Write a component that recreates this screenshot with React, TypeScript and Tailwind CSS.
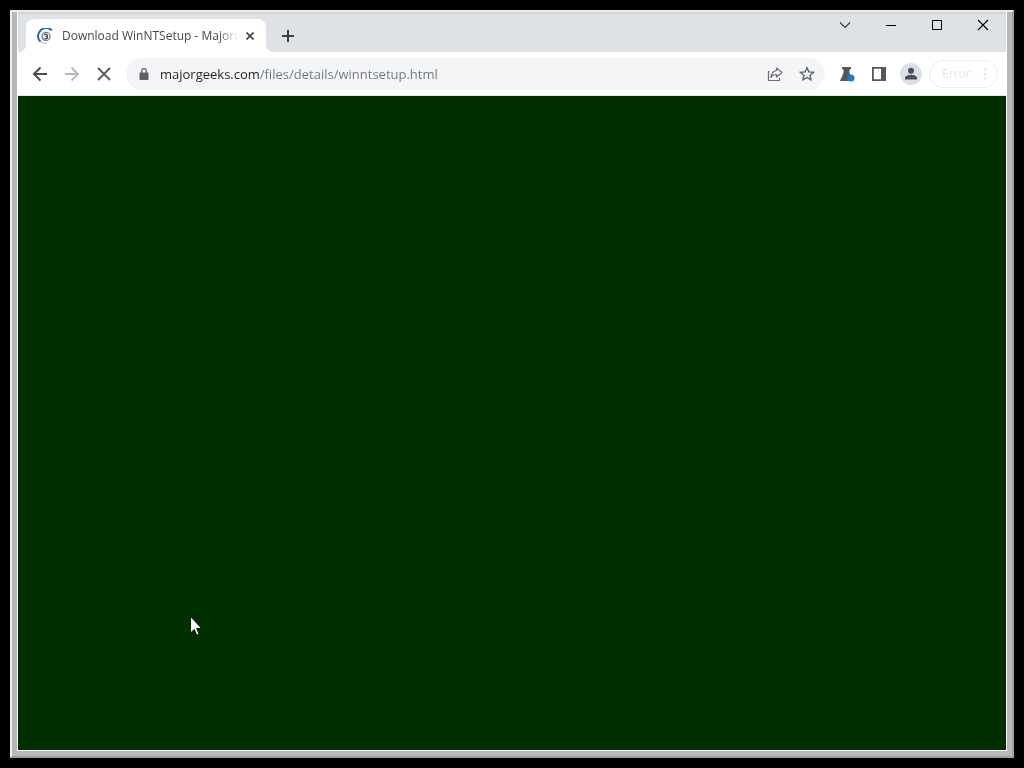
import type { ReactNode } from 'react';

const pageUrl = 'majorgeeks.com/files/details/winntsetup.html';

interface IconButtonProps {
  label: string;
  className?: string;
  children: ReactNode;
}

function IconButton({ label, className = 'w-8 h-7', children }: IconButtonProps) {
  return (
    <button
      type="button"
      aria-label={label}
      className={`${className} flex flex-shrink-0 items-center justify-center`}
    >
      {children}
    </button>
  );
}

function Favicon() {
  return (
    <svg className="w-4 h-4 flex-shrink-0" viewBox="0 0 16 16" fill="none">
      <path d="M14.8 2.4A7.6 7.6 0 0 0 2.4 4 7 7 0 0 0 3.6 13.6" stroke="#2f66b0" strokeWidth="2" />
      <path d="M3.6 13.6A7 7 0 0 0 10 15.2" stroke="#9dbbe0" strokeWidth="1" />
      <circle cx="9" cy="8.4" r="4" stroke="#6d737e" strokeWidth="1.2" />
      <path d="M7.2 6.8c1.400-1 3.400-.4 3.200.8-.1.800-1 1-1.800.9 1.400 0 2.200.6 1.800 1.500-.5.900-2 .9-2.800.2" stroke="#3b414c" strokeWidth="1.3" />
    </svg>
  );
}

function TabStrip() {
  return (
    <div className="flex h-[38px] items-end bg-[#dee1e6]">
      <div className="w-2 h-2 flex-shrink-0 bg-[radial-gradient(circle_at_0_0,transparent_8px,#fff_8px)]" />
      <div className="flex h-[33px] w-[240px] min-w-0 items-center rounded-t-lg bg-white pl-[11px] pr-3">
        <Favicon />
        <span className="ml-[9px] w-[176px] overflow-hidden whitespace-nowrap text-[12px] leading-4 text-[#45494d] [mask-image:linear-gradient(to_right,#000_156px,transparent_176px)]">
          Download WinNTSetup - MajorGeeks
        </span>
        <IconButton label="Close tab" className="ml-auto w-2 h-4">
          <svg className="w-2 h-2" viewBox="0 0 8 8" stroke="#3c4043" strokeWidth="1.6">
            <path d="M.5.5l7 7M7.5.5l-7 7" />
          </svg>
        </IconButton>
      </div>
      <div className="w-2 h-2 flex-shrink-0 bg-[radial-gradient(circle_at_100%_0,transparent_8px,#fff_8px)]" />
      <IconButton label="New tab" className="h-8 w-7">
        <svg className="w-3 h-3" viewBox="0 0 12 12" stroke="#3c4043" strokeWidth="2">
          <path d="M6 0v12M0 6h12" />
        </svg>
      </IconButton>

      <div className="ml-auto flex self-start">
        <IconButton label="Search tabs" className="h-[22px] w-[46px]">
          <svg className="w-3 h-3" viewBox="0 0 12 12" fill="none" stroke="#33363a" strokeWidth="1.1">
            <path d="M1 3.5l5 5 5-5" />
          </svg>
        </IconButton>
        <IconButton label="Minimize" className="h-[22px] w-[46px]">
          <svg className="w-3 h-3" viewBox="0 0 12 12" fill="#000">
            <path d="M1 6h10v1H1z" />
          </svg>
        </IconButton>
        <IconButton label="Maximize" className="h-[22px] w-[46px]">
          <svg className="w-3 h-3" viewBox="0 0 12 12" fill="none" stroke="#000">
            <path d="M1.5 1.5h9v9h-9z" />
          </svg>
        </IconButton>
        <IconButton label="Close" className="h-[22px] w-[46px]">
          <svg className="w-3 h-3" viewBox="0 0 12 12" stroke="#000" strokeWidth="1.1">
            <path d="M1 1l10 10M11 1L1 11" />
          </svg>
        </IconButton>
      </div>
    </div>
  );
}

function AddressBar() {
  return (
    <div className="ml-1.5 flex h-8 min-w-0 flex-1 items-center rounded-full bg-[#f4f5f6] pl-3 pr-0.5">
      <svg className="w-3 h-3 flex-shrink-0" viewBox="0 0 12 12">
        <path d="M3.7 5V3a2.3 2.3 0 0 1 4.6 0v2" fill="none" stroke="#5f6368" strokeWidth="1.3" />
        <path d="M2 4.5h8a.5.5 0 0 1 .5.5v6.5a.5.5 0 0 1-.5.5H2a.5.5 0 0 1-.5-.5V5a.5.5 0 0 1 .5-.5z" fill="#5f6368" />
      </svg>
      {/* the host name is darker than the path after it */}
      <input
        type="text"
        aria-label="Address and search bar"
        defaultValue={pageUrl}
        className="ml-2.5 h-6 min-w-0 flex-1 bg-[linear-gradient(to_right,#202124_100px,#70757a_100px)] bg-clip-text text-[13px] text-transparent outline-none"
      />
      <IconButton label="Share this page">
        <svg className="w-4 h-4" viewBox="0 0 16 16" fill="none" stroke="#6b6f74" strokeWidth="1.2">
          <path d="M2.5 5.5h-1v9h11v-2.500" />
          <path d="M9.5 2l5.500 4.500-5.500 4.500V8.500C7 8.500 5 9.500 4 11.500c.3-4 2.500-6.500 5.500-7z" strokeLinejoin="round" />
        </svg>
      </IconButton>
      <IconButton label="Bookmark this tab">
        <svg className="w-4 h-4" viewBox="0 0 16 16" fill="none" stroke="#5f6368" strokeWidth="1.4">
          <path d="M8 1.800l1.900 4.100 4.500.5-3.400 3 1 4.400L8 11.500l-4 2.300 1-4.400-3.400-3 4.500-.5z" />
        </svg>
      </IconButton>
    </div>
  );
}

function Toolbar() {
  return (
    <div className="flex h-11 items-center border-b border-[#e4e8e4] bg-white pl-1.5 pr-2">
      <IconButton label="Back">
        <svg className="w-4 h-4" viewBox="0 0 16 16" fill="none" stroke="#4b4f54" strokeWidth="2">
          <path d="M15 8H2M8.5 1.500L2 8l6.500 6.500" />
        </svg>
      </IconButton>
      <IconButton label="Forward">
        <svg className="w-4 h-4" viewBox="0 0 16 16" fill="none" stroke="#b9bbbe" strokeWidth="2">
          <path d="M1 8h13M7.5 1.500L14 8l-6.500 6.500" />
        </svg>
      </IconButton>
      <IconButton label="Stop loading">
        <svg className="w-4 h-4" viewBox="0 0 16 16" stroke="#55595d" strokeWidth="1.8">
          <path d="M2 2l12 12M14 2L2 14" />
        </svg>
      </IconButton>

      <AddressBar />

      <div className="ml-1.5 flex items-center">
        <IconButton label="Experiments">
          <svg className="w-4 h-4" viewBox="0 0 16 16">
            <path d="M3 1h9v1.500L10.500 4v3L14 15H1l3.500-8V4L3 2.500z" fill="#55595d" />
            <circle cx="12" cy="12" r="3.500" fill="#1a7fc4" />
          </svg>
        </IconButton>
        <IconButton label="Side panel">
          <svg className="w-4 h-4" viewBox="0 0 16 16">
            <path d="M1.9 1.900h12.200v12.200H1.900z" fill="none" stroke="#55595d" strokeWidth="1.8" />
            <path d="M10 1h5v14h-5z" fill="#55595d" />
          </svg>
        </IconButton>
        <IconButton label="Profile">
          <svg className="w-[22px] h-[22px]" viewBox="0 0 22 22">
            <circle cx="11" cy="11" r="11" fill="#dcdfe8" />
            <circle cx="11" cy="7.800" r="3" fill="#4a4e5a" />
            <path d="M5 16.500V15c0-2.200 4-3.300 6-3.300s6 1.100 6 3.300v1.500z" fill="#4a4e5a" />
          </svg>
        </IconButton>
        <button
          type="button"
          className="ml-0.5 flex h-7 w-[69px] items-center justify-between rounded-full border border-[#ededef] pl-3 pr-1.5 text-[12px] text-[#e6e6e8]"
        >
          Error
          <svg className="w-3 h-3" viewBox="0 0 12 12" fill="#e6e6e8">
            <circle cx="6" cy="1.500" r="1.300" />
            <circle cx="6" cy="6" r="1.300" />
            <circle cx="6" cy="10.500" r="1.300" />
          </svg>
        </button>
      </div>
    </div>
  );
}

export default function App() {
  return (
    <div className="relative flex h-screen bg-black p-[10px] font-['Open_Sans',sans-serif]">
      <div className="flex min-w-0 flex-1 flex-col border-2 border-b-[#a0a0a2] border-l-[#eeeeee] border-r-[#a0a0a2] border-t-[#eeeeee] bg-[#b8b8ba] pb-[5px] pl-[5px] pr-[5px]">
        <div className="flex min-h-0 flex-1 flex-col border-x border-b border-white">
          <div className="h-0.5 bg-[#d3d3d7]" />
          <TabStrip />
          <Toolbar />
          <main className="flex-1 bg-[#003000]" />
        </div>
      </div>

      <svg className="absolute left-[190px] top-[616px] w-3 h-5" viewBox="0 0 12 20">
        <path
          d="M.5.5v16.500l3.800-3.600 2.500 5.900 2.400-1-2.500-5.800h5z"
          fill="#fff"
          stroke="#001a00"
          strokeWidth="1"
        />
      </svg>
    </div>
  );
}
